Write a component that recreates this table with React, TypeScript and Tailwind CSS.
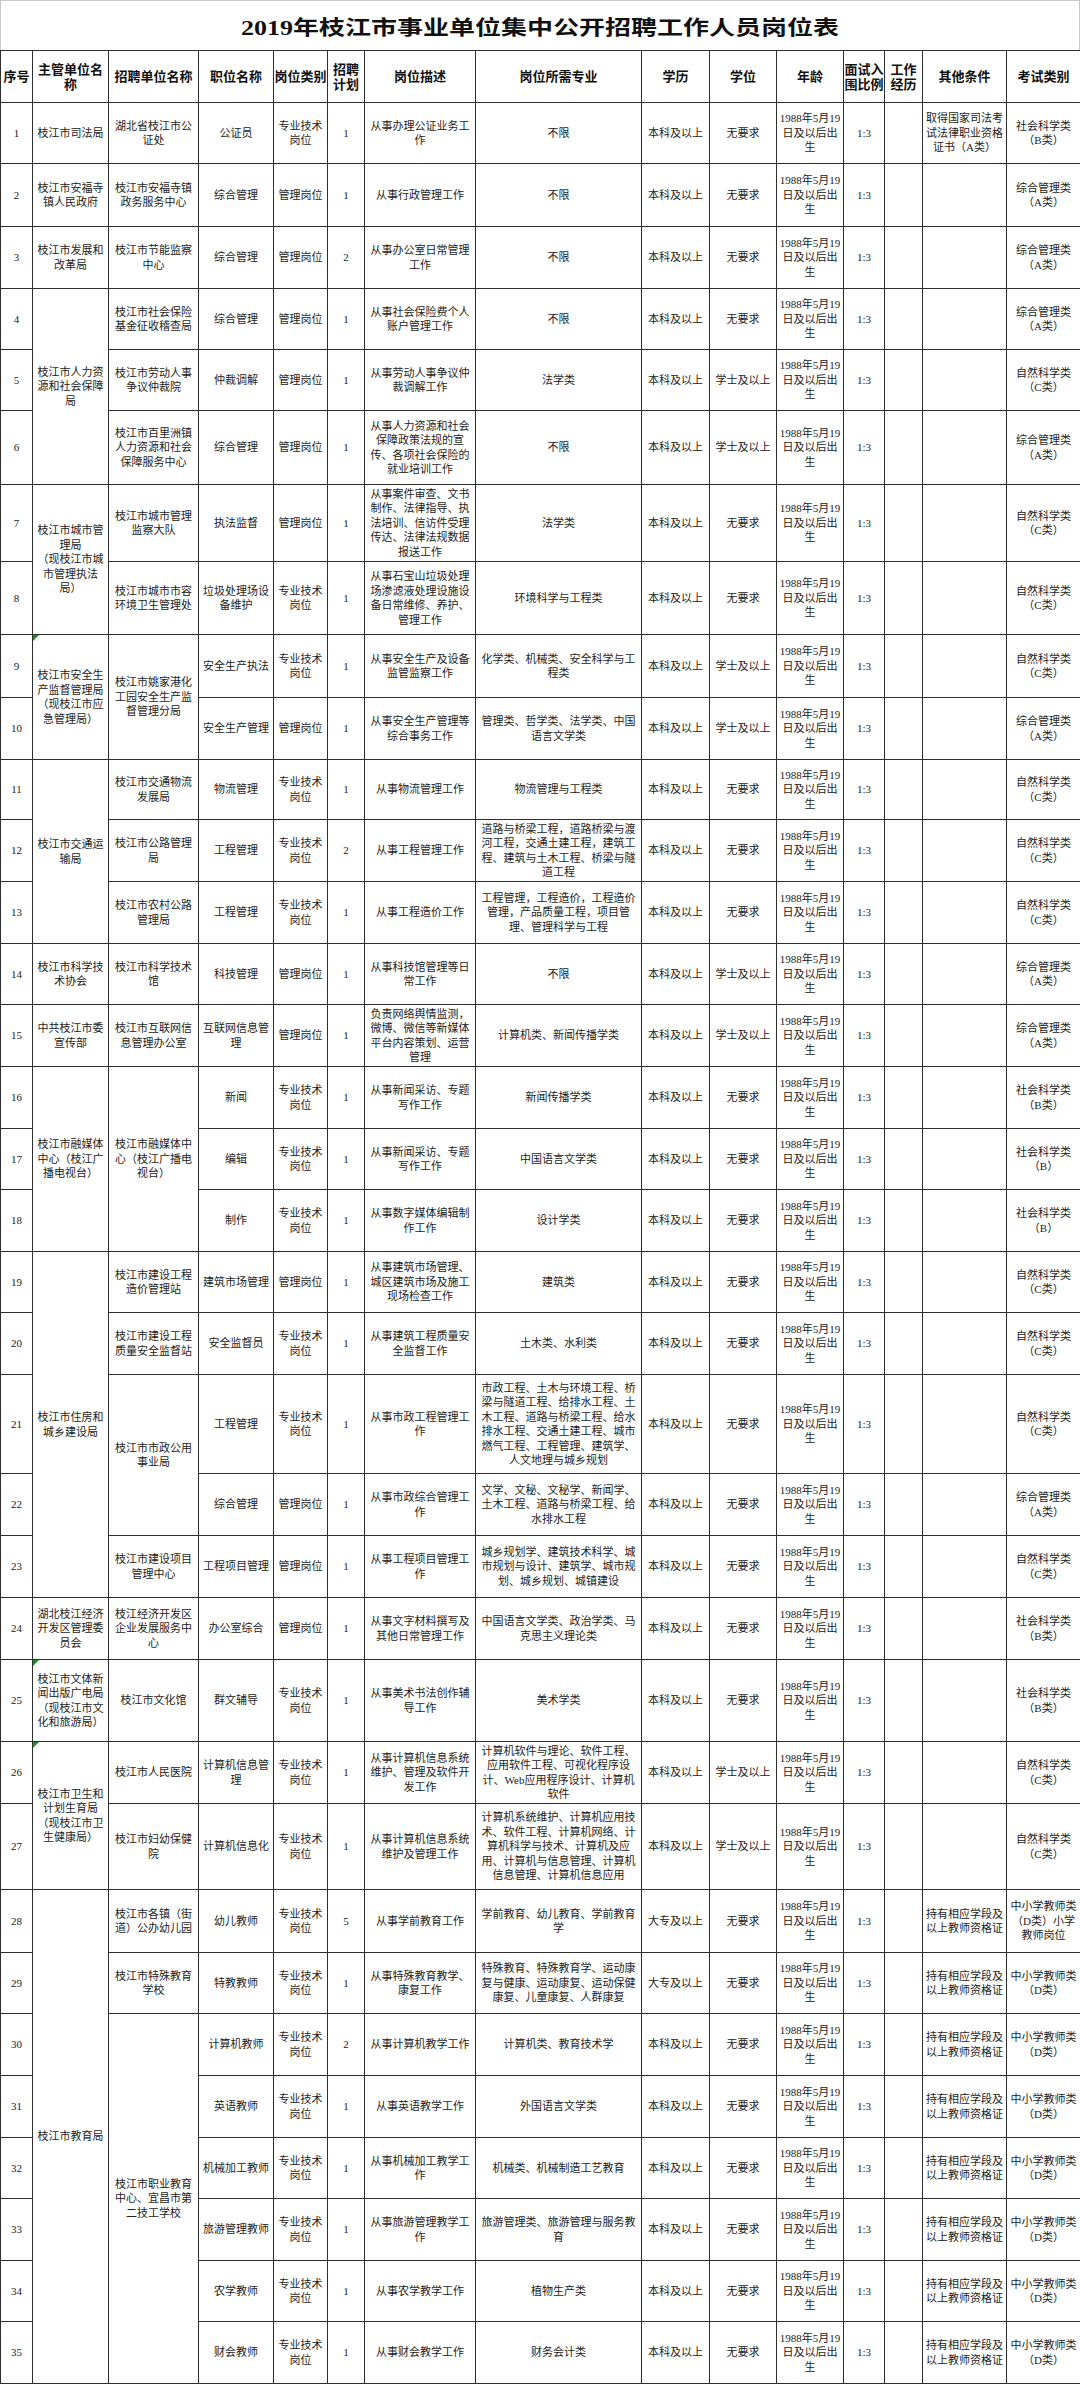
import React from "react";

const ZJ = "专业技术岗位";
const GL = "管理岗位";
const BK = "本科及以上";
const DZ = "大专及以上";
const WY = "无要求";
const XS = "学士及以上";
const ZA = "综合管理类（A类）";
const ZC = "自然科学类（C类）";
const SB = "社会科学类（B类）";
const SD = "中小学教师类（D类）";
const TEACH = "持有相应学段及以上教师资格证";

type Row = {
  n: number;
  h: string;
  sup?: React.ReactNode;
  supSpan?: number;
  supTri?: boolean;
  unit?: string;
  unitSpan?: number;
  pos: string;
  cat: string;
  plan: string;
  desc: string;
  major: string;
  edu: string;
  deg: string;
  other?: string;
  exam: string;
};

const rows: Row[] = [
  { n: 1, h: "h-[61px]", sup: "枝江市司法局", supSpan: 1, unit: "湖北省枝江市公证处", unitSpan: 1, pos: "公证员", cat: ZJ, plan: "1", desc: "从事办理公证业务工作", major: "不限", edu: BK, deg: WY, other: "取得国家司法考试法律职业资格证书（A类）", exam: SB },
  { n: 2, h: "h-[63px]", sup: "枝江市安福寺镇人民政府", supSpan: 1, unit: "枝江市安福寺镇政务服务中心", unitSpan: 1, pos: "综合管理", cat: GL, plan: "1", desc: "从事行政管理工作", major: "不限", edu: BK, deg: WY, exam: ZA },
  { n: 3, h: "h-[62px]", sup: "枝江市发展和改革局", supSpan: 1, unit: "枝江市节能监察中心", unitSpan: 1, pos: "综合管理", cat: GL, plan: "2", desc: "从事办公室日常管理工作", major: "不限", edu: BK, deg: WY, exam: ZA },
  { n: 4, h: "h-[61px]", sup: "枝江市人力资源和社会保障局", supSpan: 3, unit: "枝江市社会保险基金征收稽查局", unitSpan: 1, pos: "综合管理", cat: GL, plan: "1", desc: "从事社会保险费个人账户管理工作", major: "不限", edu: BK, deg: WY, exam: ZA },
  { n: 5, h: "h-[61px]", unit: "枝江市劳动人事争议仲裁院", unitSpan: 1, pos: "仲裁调解", cat: GL, plan: "1", desc: "从事劳动人事争议仲裁调解工作", major: "法学类", edu: BK, deg: XS, exam: ZC },
  { n: 6, h: "h-[74px]", unit: "枝江市百里洲镇人力资源和社会保障服务中心", unitSpan: 1, pos: "综合管理", cat: GL, plan: "1", desc: "从事人力资源和社会保障政策法规的宣传、各项社会保险的就业培训工作", major: "不限", edu: BK, deg: XS, exam: ZA },
  { n: 7, h: "h-[77px]", sup: (<>枝江市城市管理局<br />（现枝江市城市管理执法局）</>), supSpan: 2, unit: "枝江市城市管理监察大队", unitSpan: 1, pos: "执法监督", cat: GL, plan: "1", desc: "从事案件审查、文书制作、法律指导、执法培训、信访件受理传达、法律法规数据报送工作", major: "法学类", edu: BK, deg: WY, exam: ZC },
  { n: 8, h: "h-[73px]", unit: "枝江市城市市容环境卫生管理处", unitSpan: 1, pos: "垃圾处理场设备维护", cat: ZJ, plan: "1", desc: "从事石宝山垃圾处理场渗滤液处理设施设备日常维修、养护、管理工作", major: "环境科学与工程类", edu: BK, deg: WY, exam: ZC },
  { n: 9, h: "h-[63px]", sup: "枝江市安全生产监督管理局（现枝江市应急管理局）", supSpan: 2, supTri: true, unit: "枝江市姚家港化工园安全生产监督管理分局", unitSpan: 2, pos: "安全生产执法", cat: ZJ, plan: "1", desc: "从事安全生产及设备监管监察工作", major: "化学类、机械类、安全科学与工程类", edu: BK, deg: XS, exam: ZC },
  { n: 10, h: "h-[62px]", pos: "安全生产管理", cat: GL, plan: "1", desc: "从事安全生产管理等综合事务工作", major: "管理类、哲学类、法学类、中国语言文学类", edu: BK, deg: XS, exam: ZA },
  { n: 11, h: "h-[60px]", sup: "枝江市交通运输局", supSpan: 3, unit: "枝江市交通物流发展局", unitSpan: 1, pos: "物流管理", cat: ZJ, plan: "1", desc: "从事物流管理工作", major: "物流管理与工程类", edu: BK, deg: WY, exam: ZC },
  { n: 12, h: "h-[62px]", unit: "枝江市公路管理局", unitSpan: 1, pos: "工程管理", cat: ZJ, plan: "2", desc: "从事工程管理工作", major: "道路与桥梁工程，道路桥梁与渡河工程，交通土建工程，建筑工程、建筑与土木工程、桥梁与隧道工程", edu: BK, deg: WY, exam: ZC },
  { n: 13, h: "h-[62px]", unit: "枝江市农村公路管理局", unitSpan: 1, pos: "工程管理", cat: ZJ, plan: "1", desc: "从事工程造价工作", major: "工程管理，工程造价，工程造价管理，产品质量工程，项目管理、管理科学与工程", edu: BK, deg: WY, exam: ZC },
  { n: 14, h: "h-[61px]", sup: "枝江市科学技术协会", supSpan: 1, unit: "枝江市科学技术馆", unitSpan: 1, pos: "科技管理", cat: GL, plan: "1", desc: "从事科技馆管理等日常工作", major: "不限", edu: BK, deg: XS, exam: ZA },
  { n: 15, h: "h-[62px]", sup: "中共枝江市委宣传部", supSpan: 1, unit: "枝江市互联网信息管理办公室", unitSpan: 1, pos: "互联网信息管理", cat: GL, plan: "1", desc: "负责网络舆情监测，微博、微信等新媒体平台内容策划、运营管理", major: "计算机类、新闻传播学类", edu: BK, deg: XS, exam: ZA },
  { n: 16, h: "h-[62px]", sup: "枝江市融媒体中心（枝江广播电视台）", supSpan: 3, unit: "枝江市融媒体中心（枝江广播电视台）", unitSpan: 3, pos: "新闻", cat: ZJ, plan: "1", desc: "从事新闻采访、专题写作工作", major: "新闻传播学类", edu: BK, deg: WY, exam: SB },
  { n: 17, h: "h-[61px]", pos: "编辑", cat: ZJ, plan: "1", desc: "从事新闻采访、专题写作工作", major: "中国语言文学类", edu: BK, deg: WY, exam: "社会科学类（B）" },
  { n: 18, h: "h-[62px]", pos: "制作", cat: ZJ, plan: "1", desc: "从事数字媒体编辑制作工作", major: "设计学类", edu: BK, deg: WY, exam: "社会科学类（B）" },
  { n: 19, h: "h-[61px]", sup: "枝江市住房和城乡建设局", supSpan: 5, unit: "枝江市建设工程造价管理站", unitSpan: 1, pos: "建筑市场管理", cat: GL, plan: "1", desc: "从事建筑市场管理、城区建筑市场及施工现场检查工作", major: "建筑类", edu: BK, deg: WY, exam: ZC },
  { n: 20, h: "h-[62px]", unit: "枝江市建设工程质量安全监督站", unitSpan: 1, pos: "安全监督员", cat: ZJ, plan: "1", desc: "从事建筑工程质量安全监督工作", major: "土木类、水利类", edu: BK, deg: WY, exam: ZC },
  { n: 21, h: "h-[99px]", unit: "枝江市市政公用事业局", unitSpan: 2, pos: "工程管理", cat: ZJ, plan: "1", desc: "从事市政工程管理工作", major: "市政工程、土木与环境工程、桥梁与隧道工程、给排水工程、土木工程、道路与桥梁工程、给水排水工程、交通土建工程、城市燃气工程、工程管理、建筑学、人文地理与城乡规划", edu: BK, deg: WY, exam: ZC },
  { n: 22, h: "h-[62px]", pos: "综合管理", cat: GL, plan: "1", desc: "从事市政综合管理工作", major: "文学、文秘、文秘学、新闻学、土木工程、道路与桥梁工程、给水排水工程", edu: BK, deg: WY, exam: ZA },
  { n: 23, h: "h-[62px]", unit: "枝江市建设项目管理中心", unitSpan: 1, pos: "工程项目管理", cat: GL, plan: "1", desc: "从事工程项目管理工作", major: "城乡规划学、建筑技术科学、城市规划与设计、建筑学、城市规划、城乡规划、城镇建设", edu: BK, deg: WY, exam: ZC },
  { n: 24, h: "h-[62px]", sup: "湖北枝江经济开发区管理委员会", supSpan: 1, unit: "枝江经济开发区企业发展服务中心", unitSpan: 1, pos: "办公室综合", cat: GL, plan: "1", desc: "从事文字材料撰写及其他日常管理工作", major: "中国语言文学类、政治学类、马克思主义理论类", edu: BK, deg: WY, exam: SB },
  { n: 25, h: "h-[82px]", sup: "枝江市文体新闻出版广电局（现枝江市文化和旅游局）", supSpan: 1, supTri: true, unit: "枝江市文化馆", unitSpan: 1, pos: "群文辅导", cat: ZJ, plan: "1", desc: "从事美术书法创作辅导工作", major: "美术学类", edu: BK, deg: WY, exam: SB },
  { n: 26, h: "h-[62px]", sup: "枝江市卫生和计划生育局（现枝江市卫生健康局）", supSpan: 2, supTri: true, unit: "枝江市人民医院", unitSpan: 1, pos: "计算机信息管理", cat: ZJ, plan: "1", desc: "从事计算机信息系统维护、管理及软件开发工作", major: "计算机软件与理论、软件工程、应用软件工程、可视化程序设计、Web应用程序设计、计算机软件", edu: BK, deg: XS, exam: ZC },
  { n: 27, h: "h-[86px]", unit: "枝江市妇幼保健院", unitSpan: 1, pos: "计算机信息化", cat: ZJ, plan: "1", desc: "从事计算机信息系统维护及管理工作", major: "计算机系统维护、计算机应用技术、软件工程、计算机网络、计算机科学与技术、计算机及应用、计算机与信息管理、计算机信息管理、计算机信息应用", edu: BK, deg: XS, exam: ZC },
  { n: 28, h: "h-[63px]", sup: "枝江市教育局", supSpan: 8, unit: "枝江市各镇（街道）公办幼儿园", unitSpan: 1, pos: "幼儿教师", cat: ZJ, plan: "5", desc: "从事学前教育工作", major: "学前教育、幼儿教育、学前教育学", edu: DZ, deg: WY, other: TEACH, exam: "中小学教师类（D类）小学教师岗位" },
  { n: 29, h: "h-[61px]", unit: "枝江市特殊教育学校", unitSpan: 1, pos: "特教教师", cat: ZJ, plan: "1", desc: "从事特殊教育教学、康复工作", major: "特殊教育、特殊教育学、运动康复与健康、运动康复、运动保健康复、儿童康复、人群康复", edu: DZ, deg: WY, other: TEACH, exam: SD },
  { n: 30, h: "h-[62px]", unit: "枝江市职业教育中心、宜昌市第二技工学校", unitSpan: 6, pos: "计算机教师", cat: ZJ, plan: "2", desc: "从事计算机教学工作", major: "计算机类、教育技术学", edu: BK, deg: WY, other: TEACH, exam: SD },
  { n: 31, h: "h-[62px]", pos: "英语教师", cat: ZJ, plan: "1", desc: "从事英语教学工作", major: "外国语言文学类", edu: BK, deg: WY, other: TEACH, exam: SD },
  { n: 32, h: "h-[61px]", pos: "机械加工教师", cat: ZJ, plan: "1", desc: "从事机械加工教学工作", major: "机械类、机械制造工艺教育", edu: BK, deg: WY, other: TEACH, exam: SD },
  { n: 33, h: "h-[62px]", pos: "旅游管理教师", cat: ZJ, plan: "1", desc: "从事旅游管理教学工作", major: "旅游管理类、旅游管理与服务教育", edu: BK, deg: WY, other: TEACH, exam: SD },
  { n: 34, h: "h-[61px]", pos: "农学教师", cat: ZJ, plan: "1", desc: "从事农学教学工作", major: "植物生产类", edu: BK, deg: WY, other: TEACH, exam: SD },
  { n: 35, h: "h-[62px]", pos: "财会教师", cat: ZJ, plan: "1", desc: "从事财会教学工作", major: "财务会计类", edu: BK, deg: WY, other: TEACH, exam: SD },
];

const cols = [
  "w-[32px]", "w-[76px]", "w-[90px]", "w-[75px]", "w-[54px]", "w-[37px]", "w-[111px]", "w-[166px]",
  "w-[68px]", "w-[67px]", "w-[67px]", "w-[41px]", "w-[38px]", "w-[84px]", "w-[74px]",
];

const headers = ["序号", "主管单位名称", "招聘单位名称", "职位名称", "岗位类别", "招聘计划", "岗位描述", "岗位所需专业", "学历", "学位", "年龄", "面试入围比例", "工作经历", "其他条件", "考试类别"];

const td = "border border-[#2e2e2e] px-[2px] py-0 text-center align-middle break-all";
const th = "border border-[#2e2e2e] px-0 py-0 text-center align-middle font-bold text-[13px] leading-[15px] text-[#111]";

function Tri() {
  return <span className="absolute left-0 top-0 h-0 w-0 border-t-[6px] border-r-[6px] border-t-[#1f8f1f] border-r-transparent" />;
}

export default function App() {
  return (
    <div className="w-[1080px] bg-white text-[#222] font-['Liberation_Serif','Noto_Sans_CJK_SC',serif]">
      <div className="flex h-[50px] items-center justify-center border-x border-t border-[#c8c8c8] pt-[5px]">
        <span className="inline-block scale-x-[1.3] text-[20px] font-bold text-[#111]">
          2019年枝江市事业单位集中公开招聘工作人员岗位表
        </span>
      </div>
      <table className="w-[1080px] table-fixed border-collapse text-[11px] leading-[14.5px]">
        <colgroup>
          {cols.map((c, i) => (
            <col key={i} className={c} />
          ))}
        </colgroup>
        <thead>
          <tr className="h-[52px]">
            {headers.map((h) => (
              <th key={h} className={th}>{h}</th>
            ))}
          </tr>
        </thead>
        <tbody>
          {rows.map((r) => (
            <tr key={r.n} className={r.h}>
              <td className={td}>{r.n}</td>
              {r.sup !== undefined && (
                <td rowSpan={r.supSpan} className={td + " relative"}>
                  {r.supTri && <Tri />}
                  {r.sup}
                </td>
              )}
              {r.unit !== undefined && (
                <td rowSpan={r.unitSpan} className={td}>{r.unit}</td>
              )}
              <td className={td}>{r.pos}</td>
              <td className={td}>{r.cat}</td>
              <td className={td}>{r.plan}</td>
              <td className={td}>{r.desc}</td>
              <td className={td}>{r.major}</td>
              <td className={td}>{r.edu}</td>
              <td className={td}>{r.deg}</td>
              <td className={td}>1988年5月19日及以后出生</td>
              <td className={td}>1:3</td>
              <td className={td}></td>
              <td className={td}>{r.other ?? ""}</td>
              <td className={td}>{r.exam}</td>
            </tr>
          ))}
        </tbody>
      </table>
    </div>
  );
}
